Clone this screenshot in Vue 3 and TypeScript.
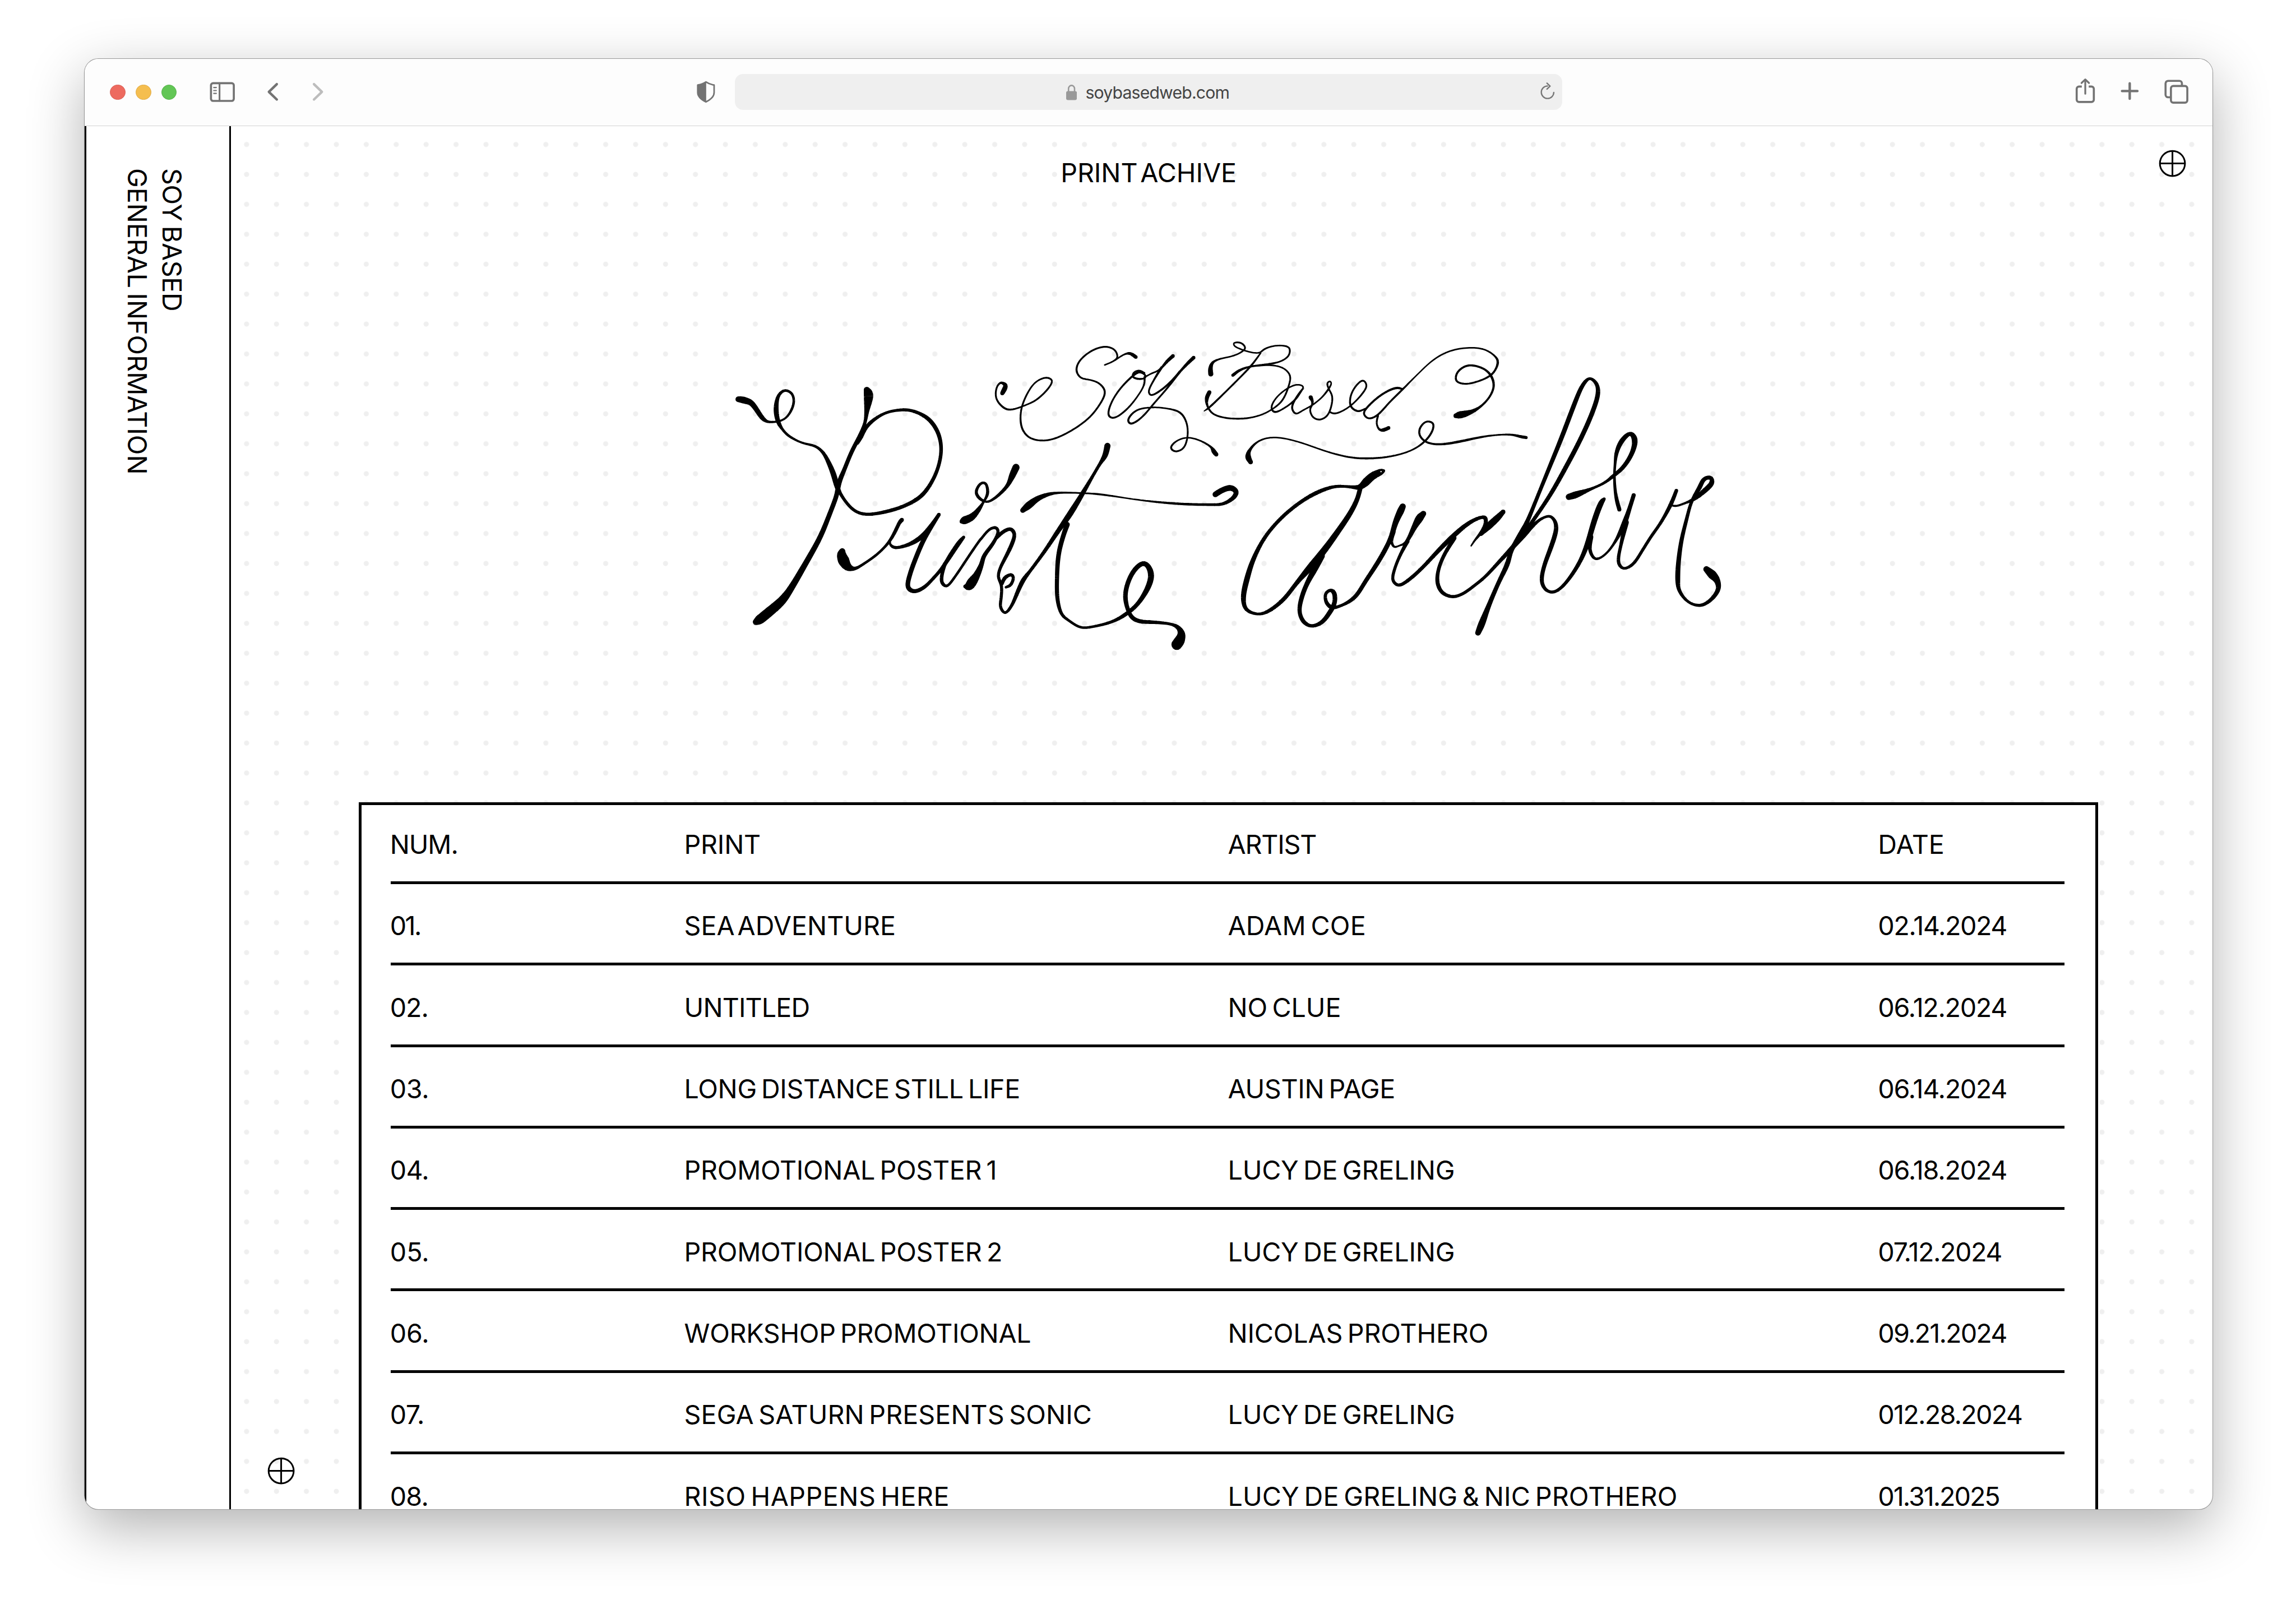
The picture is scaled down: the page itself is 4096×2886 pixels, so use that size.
<script setup lang="ts">
/* Type scale of the page, in design pixels */
const PAGE_FONT = '51px Inter'
const URL_FONT = '33px Inter'

const ruler = document.createElement('canvas').getContext('2d')!

/** Spacing that makes a label's ink exactly `width` design pixels wide. */
function track(text: string, width: number, font = PAGE_FONT) {
  ruler.font = font
  const m = ruler.measureText(text)
  const gap = text.includes(' A') ? -9 : -5
  const spaces = text.split(' ').length - 1
  const ink = m.actualBoundingBoxLeft + m.actualBoundingBoxRight + spaces * gap
  return {
    letterSpacing: `${((width - ink) / (text.length - 1)).toFixed(3)}px`,
    wordSpacing: `${gap}px`,
  }
}

type Cell = [label: string, width: number]

const rows: Cell[][] = [
  [['NUM.', 126], ['PRINT', 143.5], ['ARTIST', 171], ['DATE', 123]],
  [['01.', 55.5], ['SEA ADVENTURE', 408.5], ['ADAM COE', 266], ['02.14.2024', 247]],
  [['02.', 69], ['UNTITLED', 239], ['NO CLUE', 214.5], ['06.12.2024', 247]],
  [['03.', 70], ['LONG DISTANCE STILL LIFE', 650], ['AUSTIN PAGE', 323.5], ['06.14.2024', 247]],
  [['04.', 70], ['PROMOTIONAL POSTER 1', 603], ['LUCY DE GRELING', 436.5], ['06.18.2024', 247]],
  [['05.', 70], ['PROMOTIONAL POSTER 2', 614.5], ['LUCY DE GRELING', 436.5], ['07.12.2024', 237]],
  [['06.', 70], ['WORKSHOP PROMOTIONAL', 675], ['NICOLAS PROTHERO', 502], ['09.21.2024', 247]],
  [['07.', 61], ['SEGA SATURN PRESENTS SONIC', 792], ['LUCY DE GRELING', 436.5], ['012.28.2024', 277]],
  [['08.', 69], ['RISO HAPPENS HERE', 511], ['LUCY DE GRELING & NIC PROTHERO', 871], ['01.31.2025', 233]],
]

/*
 * Hero lettering. Every stroke is a brush path: "x,y,width" stations, with
 * the x/y pair read on the drawing sheet named by the preceding letter.
 */
const sheets: Record<string, [ox: number, sx: number]> = {
  a: [1420, 3],
  b: [1900, 2.8],
  c: [2400, 3],
  d: [2860, 3],
}

const strokes: string[] = [
  // P
  'a 65,341,11 85,343,13 110,348,13 140,358,11 170,388,10 205,430,9 235,448,5 280,449,4 312,444,4 345,429,4 375,395,5 391,350,5 378,313,5 338,298,5 301,322,6 286,385,10 297,445,9 322,483,5 360,516,5 440,550,4 515,565,5 560,594,6 598,650,9 625,705,11 646,765,10 664,793,6 700,837,6 750,876,6 815,892,6 940,877,7 1050,847,7 1140,802,8 1203,730,7 1240,655,7 1254,575,7 1235,500,8 1180,435,8 1100,400,6 1035,391,6 930,405,5 850,445,7 812,478,7 785,520,8 765,552,5',
  'a 818,296,12 828,317,19 826,345,17 817,400,9 808,450,6 785,503,8 730,590,8 685,680,8 655,740,10 641,800,9 600,890,9 545,1000,10 460,1125,11 370,1250,13 320,1305,17 250,1355,19 190,1395,19 168,1406,12',
  // r
  'a 674,1068,12 670,1085,18 682,1112,23 705,1142,16 745,1152,6 800,1128,5 870,1088,5 920,1050,5 955,1015,6 985,972,7 1010,930,7 1023,918,8',
  'a 952,1020,4 957,1038,5 980,1050,6 1020,1047,6 1080,1030,8 1145,995,10 1200,940,8 1240,892,6',
  'a 1240,893,7 1200,945,8 1150,1015,9 1110,1090,9 1070,1180,9 1058,1240,9 1092,1260,8 1150,1243,7 1210,1195,6 1260,1148,7 1310,1085,9 1360,1025,9 1385,1001,6',
  // i, n
  'a 1275,1130,7 1258,1180,7 1258,1218,7 1285,1236,5 1330,1195,5 1400,1110,5 1480,1015,5 b 45,1008,5 90,963,5 125,955,6 138,975,6 110,1030,7 60,1090,8 a 1490,1130,9 1460,1185,14 1432,1218,20 1415,1236,16 1392,1236,6',
  'b 128,1003,7 165,975,7 205,961,7 227,985,7 212,1035,8 178,1097,7 148,1150,6 138,1190,6 156,1232,6 154,1290,6 150,1335,6 175,1364,5 210,1330,6 245,1260,8 275,1205,9 310,1165,6 390,1070,7 470,965,9 530,890,12 600,790,9 650,715,6 695,648,6 722,610,11 735,564,12',
  'b 158,1222,7 176,1193,7 210,1180,6 221,1195,6 205,1230,6 180,1240,5',
  // i dot
  'a 1372,926,7 1390,920,16 1430,906,14 1470,872,9 b 58,832,4 77,800,6 80,775,6 68,743,5 43,743,5 16,785,6 38,817,6 75,832,4 105,822,5 145,795,6 190,752,7 215,705,13 235,667,14',
  // t
  'b 272,872,10 305,848,15 350,818,11 410,796,7 470,788,4 600,790,3 700,796,4 860,817,2.5 1000,832,4 1150,842,5 1300,845,5 1365,842,6 1420,815,8 1440,785,10 1410,764,11 1360,777,11 1325,796,11',
  'b 515,940,10 495,990,9 468,1080,9 459,1200,8 462,1300,8 485,1370,6 525,1400,5 590,1433,5 660,1428,5 770,1402,6 850,1360,8 905,1315,8 960,1235,11 974,1180,12 955,1137,10 928,1126,9 885,1155,9 848,1215,9 832,1285,9 848,1350,8 870,1385,8 910,1403,8 980,1407,7 1080,1416,5 1122,1433,8 1140,1465,15 1128,1497,21 1114,1514,21',
  // A
  'c 905,683,6 885,690,13 840,708,15 800,738,16 765,762,10 700,759,5 620,758,6 520,785,8 420,832,7 310,905,7 210,1000,7 140,1110,9 105,1200,11 83,1290,10 100,1347,7 170,1369,5 230,1355,7 320,1298,8 400,1215,8 480,1140,14 560,1060,13 640,970,11 710,885,10 750,820,9 769,765,9',
  'c 540,1090,14 500,1155,12 455,1225,9 425,1290,9 412,1355,8 435,1404,8 480,1426,6 540,1410,8 590,1360,9 618,1315,9 616,1268,9 595,1254,6 566,1270,6 568,1310,7 600,1337,8 650,1330,5 735,1290,8 800,1210,8 880,1110,9 945,1010,9 975,930,11 1005,875,14 1017,854,12',
  // r
  'c 962,975,9 951,1022,6 968,1048,4 1000,1040,3 1035,1028,6 1080,960,10 1115,910,16 1138,888,11',
  'c 1045,1020,8 1000,1090,6 967,1160,6 959,1207,6 993,1232,6 1060,1200,7 1140,1140,7 1220,1070,8 1300,1005,10 1400,935,8 1480,905,6 d 122,910,8 120,945,8 90,985,6 60,1015,4 38,1042,3',
  'd 225,880,9 190,910,13 140,948,14 95,985,8',
  // c, h
  'c 1320,1005,8 1260,1085,7 1225,1160,7 1221,1222,8 1250,1267,7 1310,1286,6 1370,1271,6 1440,1230,6 d 120,1190,6 200,1120,7 280,1050,9 350,985,12 400,945,7 450,912,5 500,900,5 529,925,7 536,965,9 505,1050,9 465,1140,8 451,1212,8 475,1252,6 515,1264,6 560,1246,6 620,1190,7 680,1110,8 720,1030,10 760,920,11 800,835,11 817,818,6',
  'd 78,1458,11 100,1415,14 140,1330,9 200,1215,8 250,1130,10 275,1060,8 340,970,11 370,920,8 430,800,7 500,660,8 570,520,9 640,370,9 690,275,8 732,240,5 771,265,7 782,310,9 750,400,9 680,530,9 590,670,9 500,800,8 400,922,7 350,980,8',
  // i dot
  'd 610,808,12 650,798,14 740,770,5 820,740,5 870,708,7 930,665,8 985,590,9 996,530,12 970,504,7 920,540,10 890,595,8 881,650,5 877,710,5 882,780,6 893,830,8 906,868,8',
  // i, v
  'd 740,1000,9 733,1062,7 765,1106,5 820,1086,4 880,1025,5 935,935,11 965,865,8 990,800,8',
  'd 945,930,11 915,1040,6 900,1122,7 930,1151,5 985,1131,6 1040,1065,6 1090,1000,6 1150,930,6 1210,840,8 1240,778,7',
  // e
  'd 1205,846,4 1235,852,4 1290,838,4 1340,820,7 1400,782,10 1449,740,10 1441,716,7 1403,722,8 1375,765,9 1330,828,6 1300,915,7 1270,1015,8 1253,1115,9 1248,1200,10 1256,1255,7 1310,1311,5 1380,1328,6 1440,1302,7 1486,1250,9 1479,1208,12 1450,1180,18 1416,1154,12',
  // Soy
  'b 160,312,8 172,292,10 178,274,8 152,261,4 129,285,3.5 127,340,3.5 175,386,4 215,390,3.5 290,368,3 350,342,3.5 420,280,3.5 432,250,3.5 400,237,3.5 340,260,3 290,325,3.5 261,400,3.5 267,480,4 310,526,3.5 390,539,3.5 480,518,3.5 620,442,3.5 690,370,3.5 723,305,4 690,265,3.5 640,248,3 590,239,3.5 565,205,4 580,160,3.5 650,108,3.5 725,89,3.5 775,105,3.5 790,140,3.5 765,160,3 720,177,3',
  'b 775,155,3 830,125,3 860,122,6 890,139,7',
  'b 938,235,4 936,270,3.5 905,320,3 840,390,3.5 770,431,3.5 741,419,4 750,370,3.5 800,295,3.5 875,228,4 910,210,5 938,222,4 943,238,3 905,244,4 873,233,4 880,212,3 910,203,3 938,215,3',
  'b 945,232,3 975,218,3 1020,200,3.5 1060,160,6 1093,134,7',
  'b 1030,190,5 985,255,3.5 960,305,3.5 975,323,3.5 1060,275,4 1120,220,4 1170,172,6 1206,142,7',
  'b 1130,210,5 1060,290,3.5 990,360,3.5 920,430,3.5 862,459,4 847,440,4 890,395,3.5 970,380,3 1060,385,3 1135,405,4 1170,460,3.5 1172,525,3.5 1150,576,3.5 1105,591,3.5 1081,573,4 1110,542,3 1170,524,3 1240,538,3 1302,570,4 1316,590,9 1330,605,8',
  // B
  'b 1300,220,10 1298,195,9 1310,165,5 1350,148,3 1420,134,3 1468,115,3 1489,95,3.5 1465,71,3.5 1426,72,3 1429,86,3 1475,105,3 1530,118,3 c 180,118,3 205,102,3.5 250,88,3 310,84,3 353,95,3.5 351,130,3.5 310,157,3 240,172,4 120,185,3.5 60,203,5 22,226,6',
  'c 185,120,3 130,180,4 60,240,3.5 -20,305,3.5 -120,383,4 -146,397,2',
  'b 1292,308,8 1278,335,8 1280,370,4 1310,410,3.5 1380,430,3.5 1450,434,3.5 c 110,431,3.5 180,418,3 240,395,3 310,350,3.5 350,275,3.5 358,228,3.5 320,193,3 250,178,3 130,183,3',
  // a
  'c 434,290,3.5 431,278,3 400,271,3 350,285,3 280,330,3 247,380,3.5 265,403,4 320,385,3 385,345,4 415,312,3.5 434,288,3 400,325,4 367,380,4 390,411,3.5 430,395,3 480,373,3',
  // s
  'c 478,332,8 488,350,5 486,368,4 474,390,3.5 490,426,3.5 530,439,3.5 575,420,3.5 600,370,3.5 604,325,3.5 583,290,3.5 575,265,3.5 590,255,3 599,265,3 580,295,4 540,335,3 490,368,3',
  // e
  'c 590,402,3.5 620,410,3.5 700,380,3 780,315,3.5 806,275,3.5 785,250,3.5 745,275,3.5 712,325,3.5 712,375,4 755,399,4 800,385,3',
  // d and its flourish
  'c 1015,292,4 980,286,4.5 900,315,4 820,370,4 788,408,4 815,433,3.5 865,420,4 940,355,3.5 1015,295,4 1100,225,2.5 1200,150,3 1300,108,3 1420,94,3 d 120,104,3 175,133,3.5 195,160,5 180,200,4 150,228,4 80,255,3.5 0,268,3.5 -50,253,4 -45,215,4 0,184,4 50,179,4 120,199,4 157,232,5 171,275,4.5 150,325,4 95,375,4 40,401,8 0,411,13 -30,416,14 -52,420,9',
  'c 872,420,4 864,455,3.5 880,486,4 905,488,7 934,478,7',
  // underline
  'c 126,641,9 111,617,12 118,588,6 160,548,3.5 220,527,3 300,525,3 420,548,3 560,588,3 700,618,3.5 820,624,4 950,614,3.5 1070,585,3 1150,540,4 1192,490,4 1195,456,4 1155,447,3.5 1117,480,4 1117,515,4 1155,546,4 1230,557,4 1340,545,5 1480,521,4 d 200,511,3 280,511,4 330,520,6 360,524,6',
]

type Station = { x: number; y: number; w: number }

function parse(stroke: string): Station[] {
  let [ox, sx] = sheets.a
  const out: Station[] = []
  for (const token of stroke.split(' ')) {
    if (token in sheets) {
      ;[ox, sx] = sheets[token]
      continue
    }
    const [x, y, w] = token.split(',').map(Number)
    out.push({ x: ox + x / sx - 1400, y: y / 2.45, w })
  }
  return out
}

/** Join the stations with a centripetal Catmull-Rom spline. */
function spline(p: Station[], steps = 10): Station[] {
  const out: Station[] = []
  const knot = (a: Station, b: Station) => Math.sqrt(Math.hypot(b.x - a.x, b.y - a.y)) || 0.01
  const last = p.length - 1
  const before = { x: 2 * p[0].x - p[1].x, y: 2 * p[0].y - p[1].y, w: 0 }
  const after = { x: 2 * p[last].x - p[last - 1].x, y: 2 * p[last].y - p[last - 1].y, w: 0 }
  for (let i = 0; i < last; i++) {
    const a = p[i - 1] ?? before
    const b = p[i]
    const c = p[i + 1]
    const d = p[i + 2] ?? after
    const t1 = knot(a, b)
    const t2 = t1 + knot(b, c)
    const t3 = t2 + knot(c, d)
    for (let s = 0; s < steps; s++) {
      const t = t1 + ((t2 - t1) * s) / steps
      const at = (k: 'x' | 'y') => {
        const a1 = ((t1 - t) * a[k] + t * b[k]) / t1
        const a2 = ((t2 - t) * b[k] + (t - t1) * c[k]) / (t2 - t1)
        const a3 = ((t3 - t) * c[k] + (t - t2) * d[k]) / (t3 - t2)
        const b1 = ((t2 - t) * a1 + t * a2) / t2
        const b2 = ((t3 - t) * a2 + (t - t1) * a3) / (t3 - t1)
        return ((t2 - t) * b1 + (t - t1) * b2) / (t2 - t1)
      }
      out.push({ x: at('x'), y: at('y'), w: b.w + ((c.w - b.w) * s) / steps })
    }
  }
  out.push(p[last])
  return out
}

/** Even out hand wobble with a short triangular average; ends stay put. */
function relax(p: Station[], reach = 5): Station[] {
  return p.map((_, i) => {
    const n = Math.min(reach, i, p.length - 1 - i)
    const sum = { x: 0, y: 0, w: 0 }
    let total = 0
    for (let k = -n; k <= n; k++) {
      const weight = n + 1 - Math.abs(k)
      const q = p[i + k]
      sum.x += q.x * weight
      sum.y += q.y * weight
      sum.w += q.w * weight
      total += weight
    }
    return { x: sum.x / total, y: sum.y / total, w: sum.w / total }
  })
}

/** Sweep a round brush of changing width along the stations. */
function sweep(stroke: string): string {
  const p = relax(spline(parse(stroke)))
  let d = ''
  const f = (n: number) => n.toFixed(2)
  for (let i = 0; i < p.length; i++) {
    const { x, y, w } = p[i]
    const r = w / 2
    d += `M${f(x - r)} ${f(y)}a${f(r)} ${f(r)} 0 1 1 ${f(w)} 0a${f(r)} ${f(r)} 0 1 1 ${f(-w)} 0z`
    if (i === p.length - 1) break
    const q = p[i + 1]
    const len = Math.hypot(q.x - x, q.y - y) || 1
    const nx = -(q.y - y) / len
    const ny = (q.x - x) / len
    const s = q.w / 2
    d += `M${f(x - nx * r)} ${f(y - ny * r)}L${f(q.x - nx * s)} ${f(q.y - ny * s)}L${f(q.x + nx * s)} ${f(q.y + ny * s)}L${f(x + nx * r)} ${f(y + ny * r)}z`
  }
  return d
}

const lettering = strokes.map(sweep)
</script>

<template>
  <div class="desk">
    <div class="window">
      <header class="toolbar">
        <div class="lights">
          <i class="light red"></i>
          <i class="light amber"></i>
          <i class="light green"></i>
        </div>
        <svg class="ico sidebar-ico" viewBox="0 0 50 40" width="50" height="40">
          <rect x="2.6" y="2.6" width="44.6" height="34.6" rx="4" />
          <path d="M19.3 2.6V37" stroke-width="3.4" />
          <path d="M8 11h5M8 17h5M8 22.5h5" stroke-width="2.4" />
        </svg>
        <svg class="ico back-ico" viewBox="0 0 24 40" width="24" height="40">
          <path d="M19.5 4.5 4 19.5l15.5 15" stroke-width="4.8" />
        </svg>
        <svg class="ico forward-ico" viewBox="0 0 24 40" width="24" height="40">
          <path d="M4.500 4.500 20 19.500l-15.500 15" stroke-width="4.8" />
        </svg>
        <svg class="ico shield-ico" viewBox="0 0 38 46" width="38" height="46">
          <path d="M19 3.500c5 3.500 10 5 16 6V24c0 8-6 13.500-16 18.500C9 37.500 3 32 3 24V9.500c6-1 11-2.500 16-6z" stroke-width="3" />
          <path class="solid" d="M19.500 3.500C14 7 9 8.500 3 9.500V24c0 8 6 13.500 16.500 18.500z" />
        </svg>
        <div class="address">
          <svg class="lock" viewBox="0 0 21 30" width="21" height="30">
            <rect x="0" y="12.5" width="21" height="17.5" rx="3.5" fill="#999" />
            <path d="M4.600 14V8a5.900 6.500 0 0 1 11.800 0v6" fill="none" stroke="#999" stroke-width="2.8" />
          </svg>
          <span class="url" :style="track('soybasedweb.com', 279, URL_FONT)">soybasedweb.com</span>
          <svg class="ico reload" viewBox="0 0 30 36" width="30" height="36">
            <path d="M15 7A12.200 12.200 0 1 0 27.300 19.500" stroke-width="2.6" />
            <path d="M14 1.500 20 7.200 14 13" stroke-width="2.6" />
          </svg>
        </div>
        <svg class="ico share-ico" viewBox="0 0 40 52" width="40" height="52">
          <path d="M13 18H7.500A4.500 4.500 0 0 0 3 22.500V43.500A4.500 4.500 0 0 0 7.500 48H32a4.500 4.500 0 0 0 4.500-4.500V22.500A4.500 4.500 0 0 0 32 18h-5.500" stroke-linecap="butt" />
          <path d="M19.800 32V4.500M12.500 11 19.800 4l7.200 7" stroke-width="3.6" />
        </svg>
        <svg class="ico plus-ico" viewBox="0 0 38 38" width="38" height="38">
          <path d="M19 4v30M4 19h30" stroke-width="4.8" />
        </svg>
        <svg class="ico tabs-ico" viewBox="0 0 48 48" width="48" height="48">
          <path d="M12 34.500H7.500A5 5 0 0 1 2.500 29.500V7.500A5 5 0 0 1 7.500 2.500H29.500a5 5 0 0 1 5 5V12" stroke-linecap="butt" />
          <rect x="13" y="12.5" width="32" height="32.5" rx="4.5" />
        </svg>
      </header>

      <div class="page">
        <nav class="side">
          <a :style="track('SOY BASED', 275)">SOY BASED</a>
          <a :style="track('GENERAL INFORMATION', 591)">GENERAL INFORMATION</a>
        </nav>

        <main class="main">
          <svg class="dots" width="3869" height="2700">
            <defs>
              <pattern id="dot" width="58.43" height="58.43" patternUnits="userSpaceOnUse">
                <circle cx="30.5" cy="35.8" r="5" fill="#efefef" />
              </pattern>
            </defs>
            <rect width="3869" height="2700" fill="url(#dot)" />
          </svg>
          <svg class="mark mark-top" viewBox="0 0 56 56" width="56" height="56">
            <circle cx="28" cy="28" r="24.5" />
            <path d="M28 4v48M4 28h48" />
          </svg>
          <svg class="mark mark-bottom" viewBox="0 0 56 56" width="56" height="56">
            <circle cx="28" cy="28" r="24.5" />
            <path d="M28 4v48M4 28h48" />
          </svg>

          <h1 class="title"><span :style="track('PRINT ACHIVE', 337)">PRINT ACHIVE</span></h1>

          <svg class="lettering" viewBox="0 0 2000 640" width="2000" height="640" role="img" aria-label="Soy Based Print Archive">
            <path v-for="(d, i) in lettering" :key="i" :d="d" />
            <circle cx="1296.7" cy="280.4" r="1.3" fill="#fff" />
          </svg>

          <section class="table">
            <div v-for="(row, r) in rows" :key="r" class="row">
              <div v-for="([label, width], c) in row" :key="c" class="cell">
                <span :style="track(label, width)">{{ label }}</span>
              </div>
            </div>
          </section>
        </main>
      </div>
    </div>
  </div>
</template>

<style>
html,
body {
  margin: 0;
  background: #fff;
  overflow: hidden;
}
</style>

<style scoped>
.desk {
  zoom: 0.91367;
  width: 4483px;
  height: 3159px;
  box-sizing: border-box;
  padding: 115px 0 0 165px;
  background: #fff;
  overflow: hidden;
  color: #000;
  font-family: Inter, 'Liberation Sans', sans-serif;
}

.window {
  width: 4155px;
  height: 2831px;
  border-radius: 27px;
  overflow: hidden;
  background: #fff;
  display: flex;
  flex-direction: column;
  box-shadow:
    0 0 0 1.2px #999,
    0 34px 110px rgba(0, 0, 0, 0.31);
}

/* Browser chrome */
.toolbar {
  flex: none;
  height: 131px;
  box-sizing: border-box;
  border-bottom: 1.2px solid #d2d2d2;
  background: #fdfdfd;
  display: flex;
  align-items: flex-start;
}

.lights {
  display: flex;
  gap: 20px;
  margin: 50px 0 0 50px;
}

.light {
  width: 30px;
  height: 30px;
  border-radius: 50%;
  box-sizing: border-box;
  border: 1.5px solid transparent;
}

.red {
  background: #ed6a5f;
  border-color: #d95f55;
}

.amber {
  background: #f5be4f;
  border-color: #dea945;
}

.green {
  background: #62c655;
  border-color: #55b04a;
}

.ico {
  flex: none;
  fill: none;
  stroke: #737373;
  stroke-width: 4;
  stroke-linecap: round;
  stroke-linejoin: round;
}

.ico .solid {
  fill: #737373;
  stroke: none;
}

.sidebar-ico {
  margin: 44.5px 0 0 64.5px;
}

.back-ico {
  margin: 44.5px 0 0 62px;
}

.forward-ico {
  margin: 44.5px 0 0 63.5px;
  stroke: #bdbdbd;
}

.shield-ico {
  margin: 41px 0 0 726px;
}

.address {
  flex: none;
  width: 1615px;
  height: 70px;
  margin: 30px 0 0 38.5px;
  border-radius: 16px;
  background: #efefef;
  display: flex;
  align-items: flex-start;
}

.lock {
  flex: none;
  margin: 20.5px 0 0 646px;
}

.url {
  flex: none;
  width: 887px;
  margin: 14px 0 0 17px;
  font-size: 33px;
  line-height: 44px;
  color: #444;
  white-space: nowrap;
}

.reload {
  margin: 15.5px 0 0 0;
  stroke: #777;
}

.share-ico {
  margin: 36.5px 0 0 1001px;
}

.plus-ico {
  margin: 43.5px 0 0 48px;
}

.tabs-ico {
  margin: 40px 0 0 49px;
}

/* Page */
.page {
  flex: 1;
  display: flex;
  min-height: 0;
  font-size: 51px;
}

.side {
  flex: none;
  width: 286px;
  box-sizing: border-box;
  border-left: 3.3px solid #000;
  border-right: 3.3px solid #000;
  padding: 82px 0 0 65.5px;
  display: flex;
  flex-direction: row-reverse;
  justify-content: flex-end;
  align-items: flex-start;
}

.side a {
  writing-mode: vertical-rl;
  line-height: 68px;
  white-space: nowrap;
}

.main {
  position: relative;
  flex: 1;
  min-width: 0;
  overflow: hidden;
  display: flex;
  flex-direction: column;
}

.dots {
  position: absolute;
  left: 0;
  top: 0;
}

.mark {
  position: absolute;
  fill: none;
  stroke: #000;
  stroke-width: 3.3;
}

.mark-top {
  right: 50px;
  top: 45px;
}

.mark-bottom {
  left: 69.5px;
  bottom: 47px;
}

.title {
  position: relative;
  margin: 62px 0 0 1620px;
  font-size: 51px;
  font-weight: 400;
  line-height: 60px;
  white-space: nowrap;
}

.lettering {
  position: relative;
  flex: none;
  margin: 272px 0 0 949px;
}

.table {
  position: relative;
  flex: none;
  width: 3395.5px;
  box-sizing: border-box;
  margin: 286px 0 0 250px;
  padding: 0 60px 0 56.5px;
  border: 5.5px solid #000;
  background: #fff;
}

.row {
  display: flex;
  height: 159.05px;
  box-sizing: border-box;
  border-bottom: 5.5px solid #000;
}

.row:first-child {
  height: 154.5px;
}

.cell {
  box-sizing: border-box;
  height: 100%;
  padding-top: 52px;
  line-height: 60px;
  white-space: nowrap;
}

.cell span {
  margin-left: -1.5px;
}

.row:first-child .cell {
  padding-top: 47.5px;
}

.cell:nth-child(1) {
  width: 574.5px;
}

.cell:nth-child(2) {
  width: 1061.5px;
}

.cell:nth-child(3) {
  width: 1269.5px;
}
</style>
